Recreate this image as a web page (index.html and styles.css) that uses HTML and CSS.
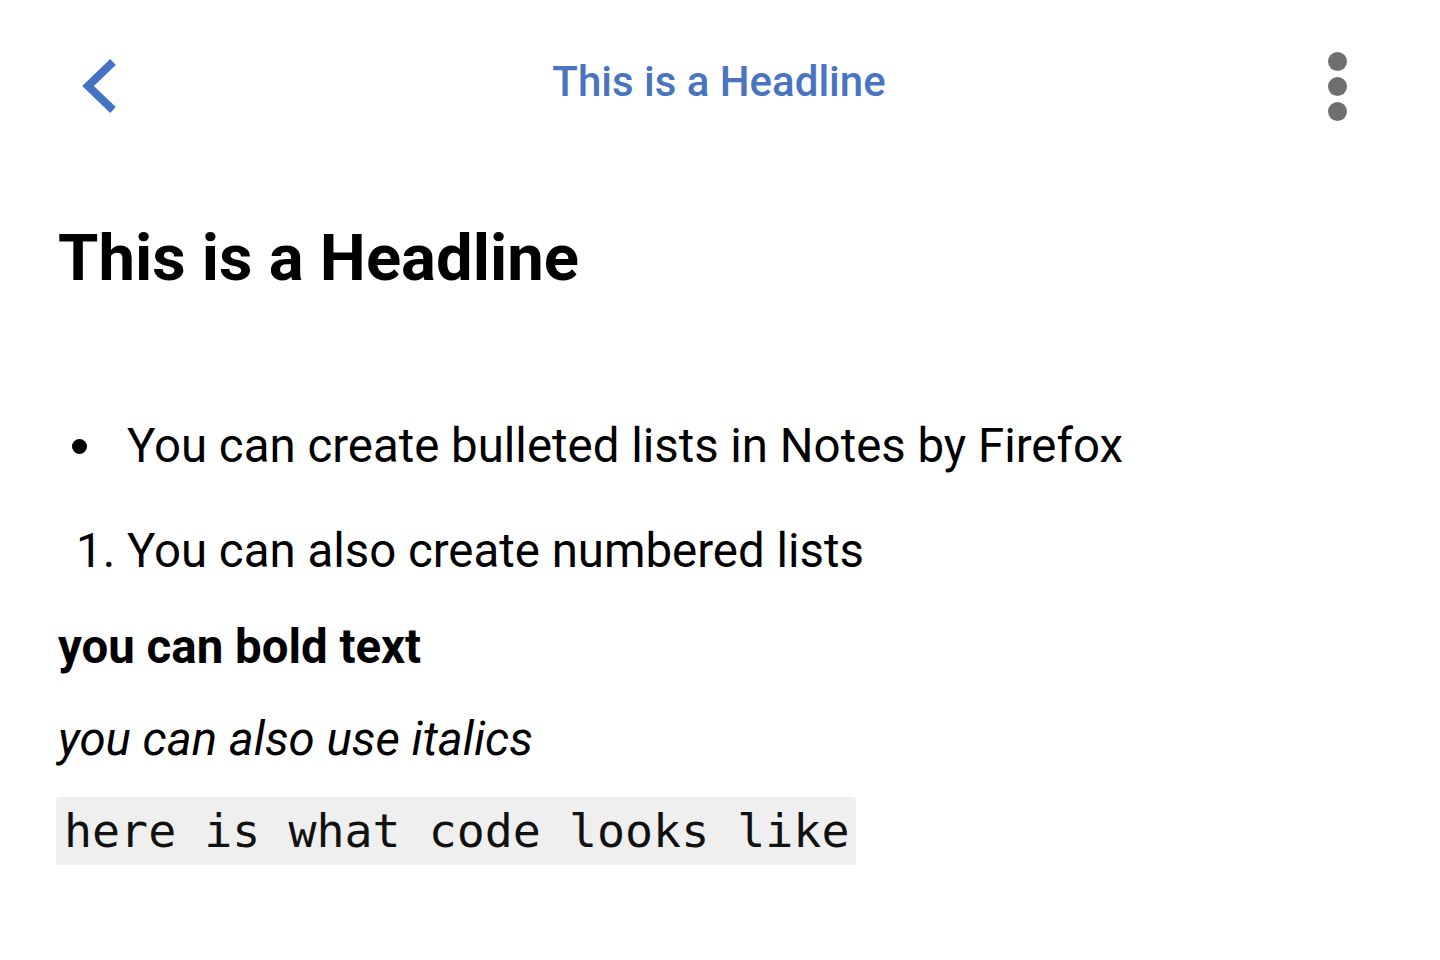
FILE: index.html
```html
<!DOCTYPE html>
<html lang="en">

<head>
    <meta charset="UTF-8">
    <meta name="viewport" content="width=device-width, initial-scale=1.0">
    <title>Notes</title>
    <link rel="stylesheet" href="styles.css">
</head>

<body>
    <header class="toolbar">
        <button class="icon-button back-button" aria-label="Back">
            <svg width="40" height="60" viewBox="0 0 40 60">
                <polyline points="33,4 8,28 33,52" fill="none" stroke="#4472c4" stroke-width="8" />
            </svg>
        </button>
        <div class="toolbar-title">This is a Headline</div>
        <button class="icon-button menu-button" aria-label="More">
            <span class="dot"></span>
            <span class="dot"></span>
            <span class="dot"></span>
        </button>
    </header>

    <main class="note">
        <h1 class="note-title">This is a Headline</h1>

        <ul class="bullets">
            <li>You can create bulleted lists in Notes by Firefox</li>
        </ul>

        <ol class="numbers">
            <li>You can also create numbered lists</li>
        </ol>

        <p class="bold-line">you can bold text</p>
        <p class="italic-line">you can also use italics</p>
        <p class="code-line"><code>here is what code looks like</code></p>
    </main>
</body>

</html>
```

FILE: styles.css
```css
body {
    margin: 0;
    background-color: #ffffff;
    font-family: 'Roboto', 'Noto Sans', sans-serif;
    color: #000000;
    width: 1440px;
    height: 960px;
    overflow: hidden;
}

.toolbar {
    display: flex;
    align-items: center;
    justify-content: space-between;
    height: 170px;
    padding: 0 82px 0 80px;
}

.icon-button {
    background: none;
    border: none;
    padding: 0;
    cursor: pointer;
}

.back-button {
    width: 40px;
    height: 60px;
    margin-top: 6px;
}

.back-button svg {
    display: block;
}

.toolbar-title {
    color: #4a74c0;
    font-size: 42px;
    font-weight: 500;
    margin-top: -8px;
}

.menu-button {
    display: flex;
    flex-direction: column;
    gap: 6px;
    width: 40px;
    align-items: center;
    margin-top: 2px;
}

.dot {
    width: 19px;
    height: 19px;
    border-radius: 50%;
    background-color: #6f6f6f;
}

.note {
    padding: 0 58px;
}

.note-title {
    font-size: 65.2px;
    font-weight: 700;
    line-height: 80px;
    margin: 48px 0 102px;
}

.bullets,
.numbers {
    margin: 0;
    font-size: 47.4px;
    line-height: 92px;
}

.bullets {
    list-style: none;
    padding-left: 14px;
    margin-bottom: 13px;
}

.bullets li {
    display: flex;
    align-items: center;
    gap: 40px;
}

.bullets li::before {
    content: '';
    flex: none;
    width: 15px;
    height: 15px;
    border-radius: 50%;
    background-color: #000000;
}

.numbers {
    padding-left: 69px;
    margin-bottom: 4px;
}

.bold-line,
.italic-line,
.code-line {
    margin: 0;
    font-size: 47.4px;
    line-height: 92px;
}

.bold-line {
    font-weight: 700;
}

.italic-line {
    font-style: italic;
}

.code-line code {
    font-family: 'DejaVu Sans Mono', monospace;
    font-size: 46.6px;
    color: #111111;
    background-color: #efefef;
    border-radius: 4px;
    padding: 7px 7px 7px 8px;
    margin-left: -2px;
}
```
